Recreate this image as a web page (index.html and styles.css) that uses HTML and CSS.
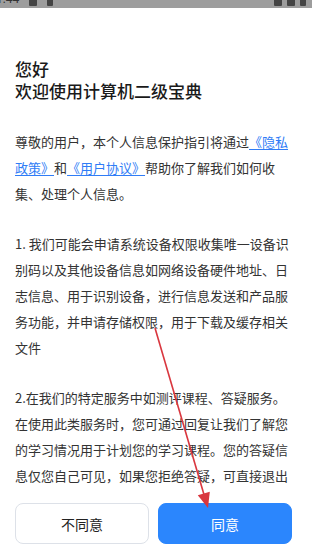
FILE: index.html
```html
<!DOCTYPE html>
<html lang="zh-CN">
<head>
<meta charset="utf-8">
<title>隐私政策</title>
<link rel="stylesheet" href="styles.css">
</head>
<body>
<div class="page">
  <div class="statusbar">
    <div class="sb-left"><span class="sb-time">1:44</span><span class="sb-icon"></span><span class="sb-icon small"></span></div>
    <div class="sb-right"><span class="sb-icon"></span><span class="sb-icon"></span><span class="sb-icon small"></span></div>
  </div>
  <main class="content">
    <h1 class="title">您好<br>欢迎使用计算机二级宝典</h1>
    <p class="para">尊敬的用户，本个人信息保护指引将通过<a class="link">《隐私政策》</a>和<a class="link">《用户协议》</a>帮助你了解我们如何收集、处理个人信息。</p>
    <p class="para">1. 我们可能会申请系统设备权限收集唯一设备识别码以及其他设备信息如网络设备硬件地址、日志信息、用于识别设备，进行信息发送和产品服务功能，并申请存储权限，用于下载及缓存相关文件</p>
    <p class="para">2.在我们的特定服务中如测评课程、答疑服务。在使用此类服务时，您可通过回复让我们了解您的学习情况用于计划您的学习课程。您的答疑信息仅您自己可见，如果您拒绝答疑，可直接退出答疑页面，不影响其他功能的正常使用。</p>
  </main>
  <footer class="footer">
    <button class="btn btn-cancel">不同意</button>
    <button class="btn btn-ok">同意</button>
  </footer>
  <svg class="arrow" width="312" height="558" viewBox="0 0 312 558">
    <line x1="155" y1="328" x2="205" y2="498" stroke="#d9363e" stroke-width="1.6"/>
    <polygon points="208,508 209.8,491.8 197.8,495.3" fill="#d9363e"/>
  </svg>
</div>
</body>
</html>
```

FILE: styles.css
```css
* { box-sizing: border-box; }
html, body { margin: 0; padding: 0; background: #fff; }
body {
  font-family: "Noto Sans CJK SC", "Noto Sans", sans-serif;
  color: #333;
}
.page {
  position: relative;
  width: 312px;
  height: 558px;
  display: flex;
  flex-direction: column;
  overflow: hidden;
}
.statusbar {
  height: 8px;
  flex: 0 0 8px;
  background: #9d9d9d;
  overflow: hidden;
  display: flex;
  justify-content: space-between;
  padding: 0 6px 0 0;
}
.sb-left, .sb-right {
  display: flex;
  align-items: flex-end;
  gap: 10px;
  margin-top: -8px;
  height: 14px;
}
.sb-time {
  font-family: "Roboto", sans-serif;
  font-size: 12px;
  line-height: 14px;
  color: #333;
  margin-left: -4px;
}
.sb-icon {
  display: inline-block;
  width: 8px;
  height: 10px;
  background: #444;
  border-radius: 1px;
}
.sb-icon.small { width: 6px; }
.sb-right { gap: 5px; }

.content {
  flex: 1;
  overflow: hidden;
  padding: 50px 20px 0 15px;
}
.title {
  margin: 0;
  font-size: 17px;
  line-height: 22px;
  font-weight: 500;
  color: #1a1a1a;
}
.para {
  margin: 24px 0 0;
  font-size: 13px;
  line-height: 26px;
  color: #333;
}
.title + .para { margin-top: 27px; }
.link {
  color: #2f7cf6;
  text-decoration: underline;
  text-underline-offset: 2px;
}
.footer {
  flex: 0 0 auto;
  display: flex;
  gap: 9px;
  padding: 13px 20px 14px 15px;
  background: #fff;
}
.btn {
  flex: 1;
  height: 41px;
  border-radius: 8px;
  font-family: "Noto Sans CJK SC", "Noto Sans", sans-serif;
  font-size: 14px;
  padding: 0;
}
.btn-cancel {
  background: #fff;
  border: 1px solid #dde1e8;
  color: #222;
}
.btn-ok {
  background: #2b86fd;
  border: 1px solid #2b86fd;
  color: #fff;
}
.arrow {
  position: absolute;
  left: 0;
  top: 0;
  pointer-events: none;
}
```
